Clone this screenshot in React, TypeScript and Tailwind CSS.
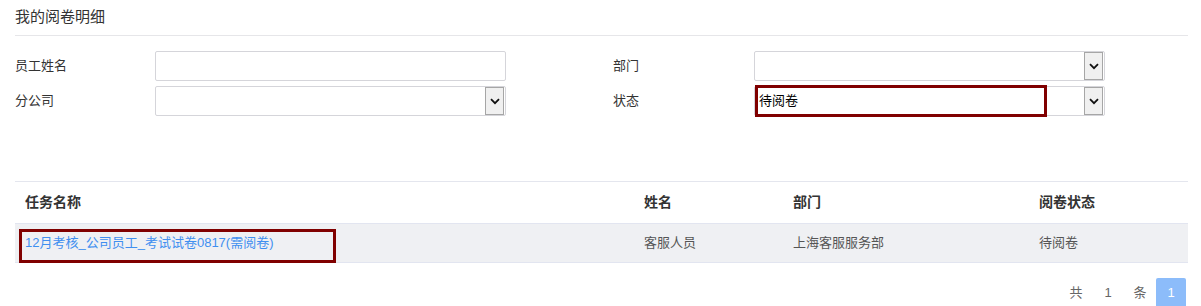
import React from "react";

const font = { fontFamily: '"Liberation Sans", "Noto Sans CJK SC", sans-serif' };

function Chevron() {
  return (
    <svg width="10" height="7" viewBox="0 0 10 7" fill="none">
      <path d="M1 1.2 L5 5.2 L9 1.2" stroke="#111" strokeWidth="1.8" />
    </svg>
  );
}

function FakeSelect({ value }: { value?: string }) {
  return (
    <div className="relative h-[30px] w-[351px] border border-[#d5d5da] rounded-[2px] bg-white flex items-center">
      <span className="pl-[4px] text-[13px] text-black">{value}</span>
      <div className="absolute right-[1px] top-[0px] bottom-[0px] w-[19px] bg-[#f0f0f0] border border-[#a6a6a6] flex items-center justify-center">
        <Chevron />
      </div>
    </div>
  );
}

function FakeInput() {
  return <div className="h-[30px] w-[351px] border border-[#d5d5da] rounded-[2px] bg-white" />;
}

export default function App() {
  return (
    <div className="relative w-[1201px] h-[306px] overflow-hidden bg-white px-[15px] pr-[13px]" style={font}>
      <div className="h-[36px] border-b border-[#e6e6e9] flex items-center text-[15px] text-[#333] pb-[1px]">
        我的阅卷明细
      </div>

      <div className="mt-[15px] grid grid-cols-[598px_1fr] gap-y-[5px]">
        <div className="flex items-center">
          <div className="w-[140px] text-[13px] text-[#333]">员工姓名</div>
          <FakeInput />
        </div>
        <div className="flex items-center">
          <div className="w-[141px] text-[13px] text-[#333]">部门</div>
          <FakeSelect />
        </div>
        <div className="flex items-center">
          <div className="w-[140px] text-[13px] text-[#333]">分公司</div>
          <FakeSelect />
        </div>
        <div className="flex items-center">
          <div className="w-[141px] text-[13px] text-[#333]">状态</div>
          <FakeSelect value="待阅卷" />
        </div>
      </div>

      <div className="mt-[65px] border-t border-[#e4e6ee]">
        <div className="grid grid-cols-[619px_149px_246px_1fr] h-[42px] items-center border-b border-[#e2e5f0] text-[14px] font-bold text-[#333]">
          <div className="pl-[10px]">任务名称</div>
          <div className="pl-[10px]">姓名</div>
          <div className="pl-[10px]">部门</div>
          <div className="pl-[10px]">阅卷状态</div>
        </div>
        <div className="grid grid-cols-[619px_149px_246px_1fr] h-[39px] items-center border-b border-[#e2e5f0] bg-[#eff0f3] text-[13px] text-[#555]">
          <div className="pl-[10px] text-[#3f8ff0]">12月考核_公司员工_考试试卷0817(需阅卷)</div>
          <div className="pl-[10px]">客服人员</div>
          <div className="pl-[10px]">上海客服服务部</div>
          <div className="pl-[10px]">待阅卷</div>
        </div>
      </div>

      <div className="mt-[15px] flex justify-end items-center text-[13px] text-[#666] pr-[2px]">
        <span className="w-[32px] text-center">共</span>
        <span className="w-[32px] text-center">1</span>
        <span className="w-[32px] text-center">条</span>
        <span className="w-[30px] h-[30px] flex items-center justify-center bg-[#8cbcfa] text-white rounded-[2px]">1</span>
      </div>

      <div className="absolute left-[755px] top-[85px] w-[292px] h-[32px] border-[3px] border-[#800000] pointer-events-none" />
      <div className="absolute left-[19px] top-[229px] w-[317px] h-[34px] border-[3px] border-[#800000] pointer-events-none" />
    </div>
  );
}
